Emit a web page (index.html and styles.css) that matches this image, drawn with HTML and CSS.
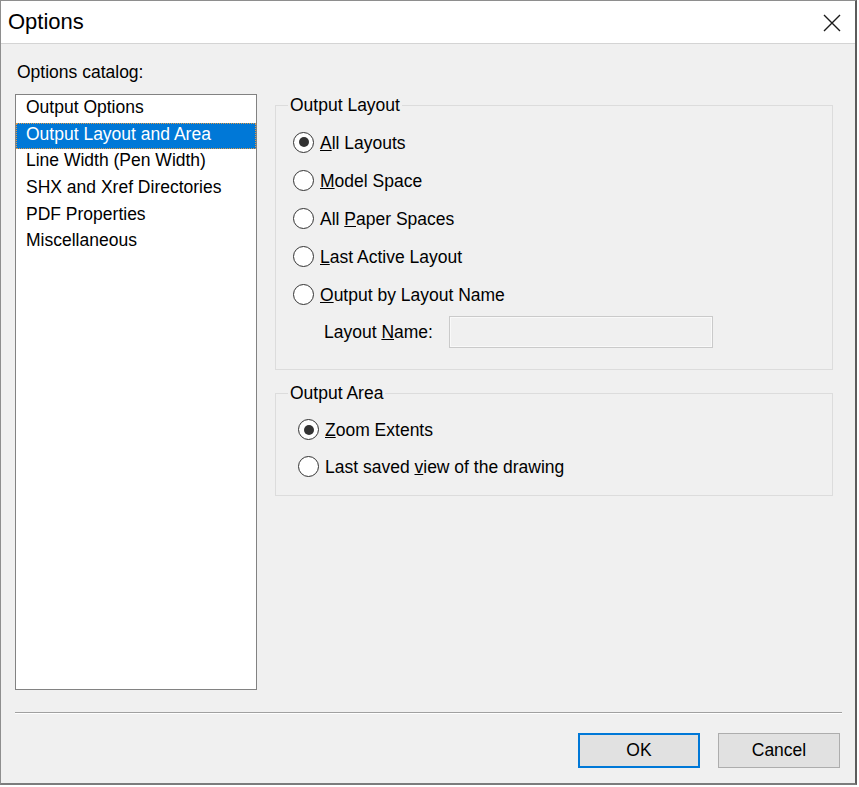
FILE: index.html
```html
<!DOCTYPE html>
<html>
<head>
<meta charset="utf-8">
<title>Options</title>
<link rel="stylesheet" href="styles.css">
</head>
<body>
<div class="window">
  <div class="titlebar">
    <span class="title">Options</span>
    <svg class="close" width="18" height="18" viewBox="0 0 18 18"><path d="M1 1 L17 17 M17 1 L1 17" stroke="#1a1a1a" stroke-width="1.4" fill="none"/></svg>
  </div>
  <div class="client">
    <div class="main">
      <div class="left">
        <div class="label">Options catalog:</div>
        <div class="listbox">
          <div class="item">Output Options</div>
          <div class="item selected">Output Layout and Area</div>
          <div class="item">Line Width (Pen Width)</div>
          <div class="item">SHX and Xref Directories</div>
          <div class="item">PDF Properties</div>
          <div class="item">Miscellaneous</div>
        </div>
      </div>
      <div class="right">
        <fieldset class="group group-layout">
          <legend>Output Layout</legend>
          <div class="rows rows-layout">
            <div class="row"><span class="radio checked"></span><span class="rtext"><u>A</u>ll Layouts</span></div>
            <div class="row"><span class="radio"></span><span class="rtext"><u>M</u>odel Space</span></div>
            <div class="row"><span class="radio"></span><span class="rtext">All <u>P</u>aper Spaces</span></div>
            <div class="row"><span class="radio"></span><span class="rtext"><u>L</u>ast Active Layout</span></div>
            <div class="row"><span class="radio"></span><span class="rtext"><u>O</u>utput by Layout Name</span></div>
            <div class="namerow"><span class="namelabel">Layout <u>N</u>ame:</span><span class="textbox"></span></div>
          </div>
        </fieldset>
        <fieldset class="group group-area">
          <legend>Output Area</legend>
          <div class="rows rows-area">
            <div class="row row-area"><span class="radio checked"></span><span class="rtext"><u>Z</u>oom Extents</span></div>
            <div class="row row-area"><span class="radio"></span><span class="rtext">Last saved <u>v</u>iew of the drawing</span></div>
          </div>
        </fieldset>
      </div>
    </div>
    <div class="separator"></div>
    <div class="buttons">
      <div class="btn default">OK</div>
      <div class="btn">Cancel</div>
    </div>
  </div>
</div>
</body>
</html>
```
FILE: styles.css
```css
html, body {
  margin: 0;
  padding: 0;
  background: #ffffff;
}
body {
  font-family: "Liberation Sans", Arial, sans-serif;
  font-size: 17.5px;
  color: #000;
}
.window {
  width: 857px;
  height: 785px;
  box-sizing: border-box;
  border: 1px solid #8e8e8e;
  border-right: 2px solid #5c5c5c;
  border-bottom: 2px solid #7c7c7c;
  background: #f0f0f0;
  display: flex;
  flex-direction: column;
}
.titlebar {
  height: 42px;
  background: #ffffff;
  border-bottom: 1px solid #d4d4d4;
  display: flex;
  align-items: center;
  justify-content: space-between;
  padding: 0 14px 0 7px;
}
.title {
  font-size: 22px;
  line-height: 42px;
  color: #000;
}
.close {
  display: block;
  margin-top: 1px;
}
.client {
  padding: 18px 13px 0 14px;
  display: flex;
  flex-direction: column;
}
.main {
  display: flex;
}
.left {
  width: 242px;
  display: flex;
  flex-direction: column;
}
.label {
  line-height: 20px;
  height: 20px;
  padding-left: 2px;
  margin-bottom: 12px;
}
.listbox {
  height: 596px;
  box-sizing: border-box;
  border: 1px solid #828282;
  background: #ffffff;
  padding-top: 1px;
}
.item {
  line-height: 22.67px;
  height: 22.67px;
  padding: 0 0 4px 10px;
  white-space: nowrap;
}
.item.selected {
  background: #0078d7;
  color: #ffffff;
  outline: 1px dotted #e39a46;
  outline-offset: -1px;
}
.right {
  margin-left: 18px;
  width: 558px;
  padding-top: 33px;
  display: flex;
  flex-direction: column;
}
.group {
  margin: 0;
  padding: 0 0 19px 0;
  border: 1px solid #dcdcdc;
  min-width: 0;
}
.group legend {
  margin-left: 12px;
  padding: 0 2px;
  line-height: 20px;
  font-size: 17.5px;
}
.group-area {
  margin-top: 13px;
  padding-bottom: 9px;
}
.rows {
  padding-top: 9px;
  display: flex;
  flex-direction: column;
}
.rows-layout {
  padding-left: 17px;
}
.rows-area {
  padding-left: 22px;
}
.row {
  height: 38px;
  display: flex;
  align-items: center;
}
.row-area {
  height: 37px;
}
.radio {
  width: 21px;
  height: 21px;
  box-sizing: border-box;
  border: 1.5px solid #333333;
  border-radius: 50%;
  background: #ffffff;
  display: flex;
  align-items: center;
  justify-content: center;
  flex: none;
  margin-top: -2px;
}
.radio.checked::after {
  content: "";
  width: 10px;
  height: 10px;
  border-radius: 50%;
  background: #333333;
}
.rtext {
  margin-left: 6px;
  white-space: nowrap;
}
.namerow {
  height: 36px;
  display: flex;
  align-items: center;
  padding-left: 31px;
}
.namelabel {
  width: 125px;
  flex: none;
}
.textbox {
  width: 264px;
  height: 32px;
  box-sizing: border-box;
  border: 1px solid #cacaca;
  box-shadow: inset 0 0 0 1px #f9f9f9;
  background: #f0f0f0;
}
.separator {
  margin-top: 22px;
  height: 0;
  border-top: 1px solid #a0a0a0;
  border-bottom: 1px solid #ffffff;
}
.buttons {
  margin-top: 19px;
  display: flex;
  justify-content: flex-end;
  gap: 18px;
  padding-right: 2px;
}
.btn {
  width: 122px;
  height: 35px;
  box-sizing: border-box;
  border: 1px solid #adadad;
  background: #e1e1e1;
  display: flex;
  align-items: center;
  justify-content: center;
}
.btn.default {
  border: 2px solid #0078d7;
}
```
